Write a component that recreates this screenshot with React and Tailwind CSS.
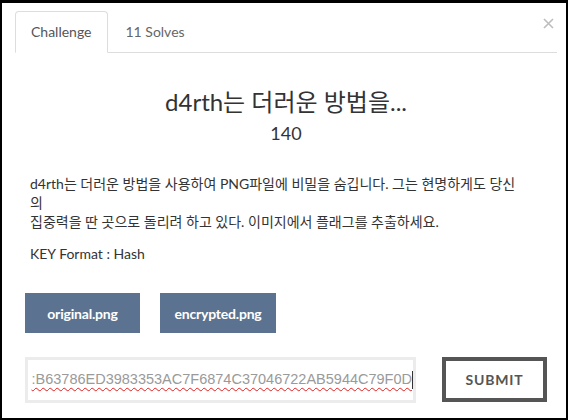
const FONT = "font-['Lato','Noto_Sans_CJK_KR',sans-serif]";

const CloseIcon = () => (
  <svg width="11" height="11" viewBox="0 0 11 11" className="block">
    <path d="M1 1L10 10M10 1L1 10" stroke="#bdbdbd" strokeWidth="1.6" />
  </svg>
);

const App = () => {
  const flag = ":B63786ED3983353AC7F6874C37046722AB5944C79F0D";

  return (
    <div
      className={`${FONT} relative w-[568px] h-[420px] bg-white border-black border-t-[3px] border-x-2 border-b-2 overflow-hidden`}
    >
      {/* tabs */}
      <div className="pl-[13px] pr-[9px] pt-2">
        <div className="flex border-b border-[#dddddd]">
          <div className="mr-[2px] -mb-px px-[15px] py-[10px] text-[14px] leading-5 text-[#555555] bg-white border border-[#dddddd] border-b-transparent rounded-t-[4px]">
            Challenge
          </div>
          <div className="-mb-px px-[15px] py-[10px] text-[14px] leading-5 text-[#666666] border border-transparent">
            11 Solves
          </div>
        </div>
      </div>
      <button className="absolute top-[15px] right-[12px] p-0">
        <CloseIcon />
      </button>

      {/* body */}
      <div className="pl-[23px] pr-[19px]">
        <div className="-ml-[10px] w-[542px] text-center text-[#333333]">
          <h1 className="mt-[36px] text-[24px] leading-[26px]">d4rth는 더러운 방법을...</h1>
          <div className="mt-[8px] text-[18px] leading-[20px]">140</div>
        </div>

        <div className="pl-[5px] text-[14px] leading-[19px] text-[#333333]">
          <p className="mt-[31px] whitespace-nowrap">
            d4rth는 더러운 방법을 사용하여 PNG파일에 비밀을 숨깁니다. 그는 현명하게도 당신
            <br />
            의
            <br />
            집중력을 딴 곳으로 돌리려 하고 있다. 이미지에서 플래그를 추출하세요.
          </p>
          <p className="mt-[13px]">KEY Format : Hash</p>
        </div>

        <div className="mt-[30px] flex gap-5">
          <button className="w-[115px] h-10 bg-[#5b7290] text-white text-[14px] font-bold tracking-[-0.2px]">
            original.png
          </button>
          <button className="w-[116px] h-10 bg-[#5b7290] text-white text-[14px] font-bold tracking-[-0.2px]">
            encrypted.png
          </button>
        </div>

        <div className="mt-[24px] flex items-start">
          <div className="w-[391px] h-[46px] border-[3px] border-[#ececec] pl-[9px] flex items-center justify-end overflow-hidden">
            <span className="whitespace-nowrap font-['Liberation_Sans',sans-serif] text-[14.5px] text-[#9a9a9a] underline decoration-wavy decoration-[#e02020] decoration-1 underline-offset-[3px]">
              {flag}
            </span>
            <span className="shrink-0 w-px h-[18px] bg-[#333333]" />
          </div>
          <button className="ml-[26px] w-[105px] h-[45px] border-4 border-[#555555] text-[14px] font-bold tracking-[0.8px] text-[#555555]">
            SUBMIT
          </button>
        </div>
      </div>
    </div>
  );
};

export default App;
